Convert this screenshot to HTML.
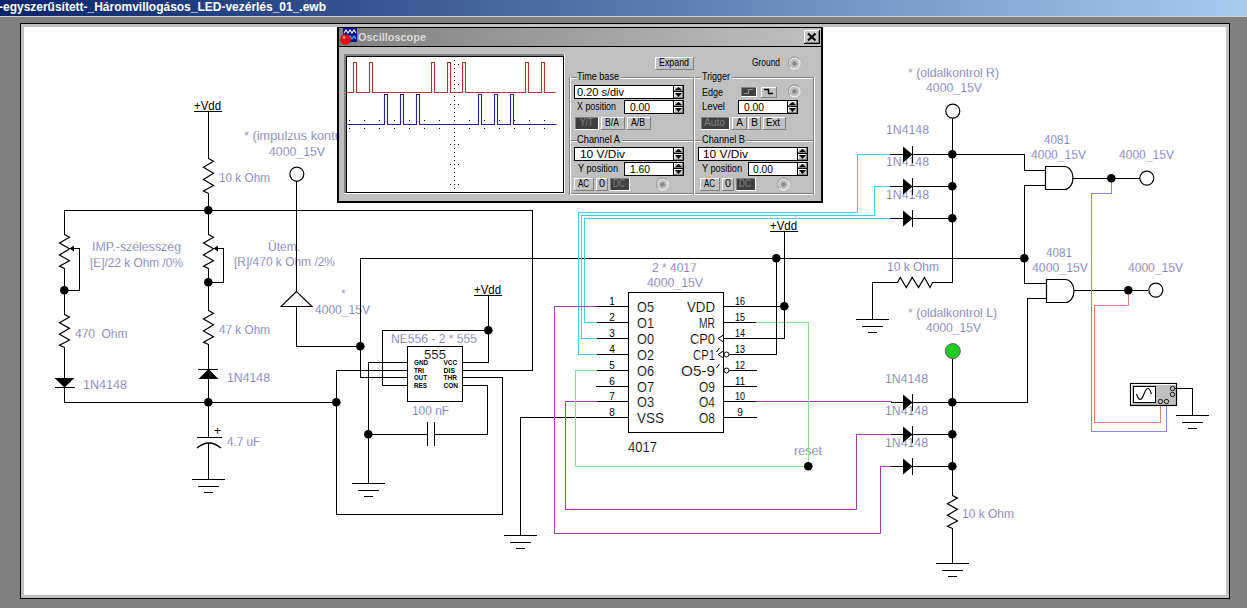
<!DOCTYPE html>
<html><head><meta charset="utf-8"><style>
html,body{margin:0;padding:0;}
body{width:1247px;height:608px;overflow:hidden;background:#808080;position:relative;font-family:"Liberation Sans",sans-serif;}
#tb{position:absolute;left:0;top:0;width:1247px;height:16px;background:linear-gradient(to right,#0a246a,#a6caf0);}
#hl{position:absolute;left:0;top:16px;width:1247px;height:1px;background:#d4d0c8;}
#cv{position:absolute;left:20px;top:23px;width:1208px;height:574px;border:1px solid #000;background:#fff;box-shadow:inset 3px 3px 0 #c0c0c0,inset -3px -3px 0 #c0c0c0;}
svg{position:absolute;left:0;top:0;}
</style></head><body>
<div id="tb"><svg width="400" height="16"><text x="-1" y="10.8" font-family="Liberation Sans" font-weight="bold" font-size="12.5" fill="#fff" textLength="327" lengthAdjust="spacingAndGlyphs">-egyszerűsített-_Háromvillogásos_LED-vezérlés_01_.ewb</text></svg></div>
<div id="hl"></div>
<div id="cv"></div>
<svg width="1247" height="608" viewBox="0 0 1247 608" shape-rendering="auto">
<text x="194" y="110" font-family="Liberation Sans" font-size="13" fill="#000" font-weight="normal" text-anchor="start" textLength="27" lengthAdjust="spacingAndGlyphs">+Vdd</text>
<text x="214" y="435" font-family="Liberation Sans" font-size="12" fill="#000" font-weight="normal" text-anchor="start">+</text>
<text x="474" y="294" font-family="Liberation Sans" font-size="13" fill="#000" font-weight="normal" text-anchor="start" textLength="27" lengthAdjust="spacingAndGlyphs">+Vdd</text>
<text x="770" y="230" font-family="Liberation Sans" font-size="13" fill="#000" font-weight="normal" text-anchor="start" textLength="27" lengthAdjust="spacingAndGlyphs">+Vdd</text>
<text x="219" y="182" font-family="Liberation Sans" font-size="12" fill="#5c5ca4" font-weight="normal" text-anchor="start" textLength="51" lengthAdjust="spacingAndGlyphs" stroke="#fff" stroke-width="0.25">10 k Ohm</text>
<text x="244" y="140" font-family="Liberation Sans" font-size="12" fill="#5c5ca4" font-weight="normal" text-anchor="start" textLength="95" lengthAdjust="spacingAndGlyphs" stroke="#fff" stroke-width="0.25">* (impulzus kontr</text>
<text x="269" y="156" font-family="Liberation Sans" font-size="12" fill="#5c5ca4" font-weight="normal" text-anchor="start" textLength="56" lengthAdjust="spacingAndGlyphs" stroke="#fff" stroke-width="0.25">4000_15V</text>
<text x="92" y="251" font-family="Liberation Sans" font-size="12" fill="#5c5ca4" font-weight="normal" text-anchor="start" textLength="89" lengthAdjust="spacingAndGlyphs" stroke="#fff" stroke-width="0.25">IMP.-szélesszég</text>
<text x="90" y="267" font-family="Liberation Sans" font-size="12" fill="#5c5ca4" font-weight="normal" text-anchor="start" textLength="93" lengthAdjust="spacingAndGlyphs" stroke="#fff" stroke-width="0.25">[E]/22 k Ohm /0%</text>
<text x="75" y="338" font-family="Liberation Sans" font-size="12" fill="#5c5ca4" font-weight="normal" text-anchor="start" textLength="20" lengthAdjust="spacingAndGlyphs" stroke="#fff" stroke-width="0.25">470</text>
<text x="101.5" y="338" font-family="Liberation Sans" font-size="12" fill="#5c5ca4" font-weight="normal" text-anchor="start" textLength="26" lengthAdjust="spacingAndGlyphs" stroke="#fff" stroke-width="0.25">Ohm</text>
<text x="83" y="389" font-family="Liberation Sans" font-size="12" fill="#5c5ca4" font-weight="normal" text-anchor="start" textLength="44" lengthAdjust="spacingAndGlyphs" stroke="#fff" stroke-width="0.25">1N4148</text>
<text x="268" y="251" font-family="Liberation Sans" font-size="12" fill="#5c5ca4" font-weight="normal" text-anchor="start" textLength="32" lengthAdjust="spacingAndGlyphs" stroke="#fff" stroke-width="0.25">Ütem.</text>
<text x="234" y="266" font-family="Liberation Sans" font-size="12" fill="#5c5ca4" font-weight="normal" text-anchor="start" textLength="101" lengthAdjust="spacingAndGlyphs" stroke="#fff" stroke-width="0.25">[R]/470 k Ohm /2%</text>
<text x="341" y="298" font-family="Liberation Sans" font-size="12" fill="#5c5ca4" font-weight="normal" text-anchor="start" stroke="#fff" stroke-width="0.25">*</text>
<text x="315" y="314" font-family="Liberation Sans" font-size="12" fill="#5c5ca4" font-weight="normal" text-anchor="start" textLength="55" lengthAdjust="spacingAndGlyphs" stroke="#fff" stroke-width="0.25">4000_15V</text>
<text x="219" y="334" font-family="Liberation Sans" font-size="12" fill="#5c5ca4" font-weight="normal" text-anchor="start" textLength="51" lengthAdjust="spacingAndGlyphs" stroke="#fff" stroke-width="0.25">47 k Ohm</text>
<text x="227" y="382" font-family="Liberation Sans" font-size="12" fill="#5c5ca4" font-weight="normal" text-anchor="start" textLength="43" lengthAdjust="spacingAndGlyphs" stroke="#fff" stroke-width="0.25">1N4148</text>
<text x="227" y="446" font-family="Liberation Sans" font-size="12" fill="#5c5ca4" font-weight="normal" text-anchor="start" textLength="33" lengthAdjust="spacingAndGlyphs" stroke="#fff" stroke-width="0.25">4.7 uF</text>
<text x="391" y="343" font-family="Liberation Sans" font-size="12" fill="#5c5ca4" font-weight="normal" text-anchor="start" textLength="86" lengthAdjust="spacingAndGlyphs" stroke="#fff" stroke-width="0.25">NE556 - 2 * 555</text>
<text x="412" y="415" font-family="Liberation Sans" font-size="12" fill="#5c5ca4" font-weight="normal" text-anchor="start" textLength="37" lengthAdjust="spacingAndGlyphs" stroke="#fff" stroke-width="0.25">100 nF</text>
<text x="652" y="272" font-family="Liberation Sans" font-size="12" fill="#5c5ca4" font-weight="normal" text-anchor="start" stroke="#fff" stroke-width="0.25">2 * 4017</text>
<text x="647" y="287" font-family="Liberation Sans" font-size="12" fill="#5c5ca4" font-weight="normal" text-anchor="start" textLength="56" lengthAdjust="spacingAndGlyphs" stroke="#fff" stroke-width="0.25">4000_15V</text>
<text x="794" y="455" font-family="Liberation Sans" font-size="12" fill="#5c5ca4" font-weight="normal" text-anchor="start" textLength="28" lengthAdjust="spacingAndGlyphs" stroke="#fff" stroke-width="0.25">reset</text>
<text x="908" y="77" font-family="Liberation Sans" font-size="12" fill="#5c5ca4" font-weight="normal" text-anchor="start" textLength="91" lengthAdjust="spacingAndGlyphs" stroke="#fff" stroke-width="0.25">* (oldalkontrol R)</text>
<text x="926" y="92" font-family="Liberation Sans" font-size="12" fill="#5c5ca4" font-weight="normal" text-anchor="start" textLength="56" lengthAdjust="spacingAndGlyphs" stroke="#fff" stroke-width="0.25">4000_15V</text>
<text x="886" y="134" font-family="Liberation Sans" font-size="12" fill="#5c5ca4" font-weight="normal" text-anchor="start" textLength="43" lengthAdjust="spacingAndGlyphs" stroke="#fff" stroke-width="0.25">1N4148</text>
<text x="886" y="166" font-family="Liberation Sans" font-size="12" fill="#5c5ca4" font-weight="normal" text-anchor="start" textLength="43" lengthAdjust="spacingAndGlyphs" stroke="#fff" stroke-width="0.25">1N4148</text>
<text x="886" y="199" font-family="Liberation Sans" font-size="12" fill="#5c5ca4" font-weight="normal" text-anchor="start" textLength="43" lengthAdjust="spacingAndGlyphs" stroke="#fff" stroke-width="0.25">1N4148</text>
<text x="887" y="271" font-family="Liberation Sans" font-size="12" fill="#5c5ca4" font-weight="normal" text-anchor="start" textLength="52" lengthAdjust="spacingAndGlyphs" stroke="#fff" stroke-width="0.25">10 k Ohm</text>
<text x="908" y="317" font-family="Liberation Sans" font-size="12" fill="#5c5ca4" font-weight="normal" text-anchor="start" textLength="89" lengthAdjust="spacingAndGlyphs" stroke="#fff" stroke-width="0.25">* (oldalkontrol L)</text>
<text x="926" y="332" font-family="Liberation Sans" font-size="12" fill="#5c5ca4" font-weight="normal" text-anchor="start" textLength="55" lengthAdjust="spacingAndGlyphs" stroke="#fff" stroke-width="0.25">4000_15V</text>
<text x="885" y="383" font-family="Liberation Sans" font-size="12" fill="#5c5ca4" font-weight="normal" text-anchor="start" textLength="43" lengthAdjust="spacingAndGlyphs" stroke="#fff" stroke-width="0.25">1N4148</text>
<text x="885" y="415" font-family="Liberation Sans" font-size="12" fill="#5c5ca4" font-weight="normal" text-anchor="start" textLength="43" lengthAdjust="spacingAndGlyphs" stroke="#fff" stroke-width="0.25">1N4148</text>
<text x="885" y="447" font-family="Liberation Sans" font-size="12" fill="#5c5ca4" font-weight="normal" text-anchor="start" textLength="43" lengthAdjust="spacingAndGlyphs" stroke="#fff" stroke-width="0.25">1N4148</text>
<text x="962" y="518" font-family="Liberation Sans" font-size="12" fill="#5c5ca4" font-weight="normal" text-anchor="start" textLength="52" lengthAdjust="spacingAndGlyphs" stroke="#fff" stroke-width="0.25">10 k Ohm</text>
<text x="1044" y="144" font-family="Liberation Sans" font-size="12" fill="#5c5ca4" font-weight="normal" text-anchor="start" textLength="26" lengthAdjust="spacingAndGlyphs" stroke="#fff" stroke-width="0.25">4081</text>
<text x="1031" y="159" font-family="Liberation Sans" font-size="12" fill="#5c5ca4" font-weight="normal" text-anchor="start" textLength="55" lengthAdjust="spacingAndGlyphs" stroke="#fff" stroke-width="0.25">4000_15V</text>
<text x="1119" y="159" font-family="Liberation Sans" font-size="12" fill="#5c5ca4" font-weight="normal" text-anchor="start" textLength="55" lengthAdjust="spacingAndGlyphs" stroke="#fff" stroke-width="0.25">4000_15V</text>
<text x="1046" y="257" font-family="Liberation Sans" font-size="12" fill="#5c5ca4" font-weight="normal" text-anchor="start" textLength="26" lengthAdjust="spacingAndGlyphs" stroke="#fff" stroke-width="0.25">4081</text>
<text x="1032" y="272" font-family="Liberation Sans" font-size="12" fill="#5c5ca4" font-weight="normal" text-anchor="start" textLength="56" lengthAdjust="spacingAndGlyphs" stroke="#fff" stroke-width="0.25">4000_15V</text>
<text x="1128" y="272" font-family="Liberation Sans" font-size="12" fill="#5c5ca4" font-weight="normal" text-anchor="start" textLength="55" lengthAdjust="spacingAndGlyphs" stroke="#fff" stroke-width="0.25">4000_15V</text>
<text x="424" y="358.5" font-family="Liberation Sans" font-size="12" fill="#000" font-weight="normal" text-anchor="start" textLength="22" lengthAdjust="spacingAndGlyphs" stroke="#fff" stroke-width="0.15">555</text>
<text x="414" y="364.8" font-family="Liberation Sans" font-size="7.5" fill="#000" font-weight="bold" text-anchor="start" textLength="14" lengthAdjust="spacingAndGlyphs">GND</text>
<text x="443.5" y="364.8" font-family="Liberation Sans" font-size="7.5" fill="#000" font-weight="bold" text-anchor="start" textLength="13.5" lengthAdjust="spacingAndGlyphs">VCC</text>
<text x="414" y="372.5" font-family="Liberation Sans" font-size="7.5" fill="#000" font-weight="bold" text-anchor="start" textLength="10" lengthAdjust="spacingAndGlyphs">TRI</text>
<text x="443.5" y="372.5" font-family="Liberation Sans" font-size="7.5" fill="#000" font-weight="bold" text-anchor="start" textLength="11.5" lengthAdjust="spacingAndGlyphs">DIS</text>
<text x="414" y="380.2" font-family="Liberation Sans" font-size="7.5" fill="#000" font-weight="bold" text-anchor="start" textLength="13" lengthAdjust="spacingAndGlyphs">OUT</text>
<text x="443.5" y="380.2" font-family="Liberation Sans" font-size="7.5" fill="#000" font-weight="bold" text-anchor="start" textLength="13.5" lengthAdjust="spacingAndGlyphs">THR</text>
<text x="414" y="387.90000000000003" font-family="Liberation Sans" font-size="7.5" fill="#000" font-weight="bold" text-anchor="start" textLength="13" lengthAdjust="spacingAndGlyphs">RES</text>
<text x="443.5" y="387.90000000000003" font-family="Liberation Sans" font-size="7.5" fill="#000" font-weight="bold" text-anchor="start" textLength="14.5" lengthAdjust="spacingAndGlyphs">CON</text>
<text x="637" y="311.5" font-family="Liberation Sans" font-size="14" fill="#000" font-weight="normal" text-anchor="start" textLength="17" lengthAdjust="spacingAndGlyphs" stroke="#fff" stroke-width="0.15">O5</text>
<text x="687" y="311.5" font-family="Liberation Sans" font-size="14" fill="#000" font-weight="normal" text-anchor="start" textLength="28" lengthAdjust="spacingAndGlyphs" stroke="#fff" stroke-width="0.15">VDD</text>
<text x="612" y="304.5" font-family="Liberation Sans" font-size="10" fill="#000" font-weight="normal" text-anchor="middle">1</text>
<text x="740" y="304.5" font-family="Liberation Sans" font-size="10" fill="#000" font-weight="normal" text-anchor="middle" textLength="10" lengthAdjust="spacingAndGlyphs">16</text>
<text x="637" y="327.5" font-family="Liberation Sans" font-size="14" fill="#000" font-weight="normal" text-anchor="start" textLength="17" lengthAdjust="spacingAndGlyphs" stroke="#fff" stroke-width="0.15">O1</text>
<text x="699" y="327.5" font-family="Liberation Sans" font-size="14" fill="#000" font-weight="normal" text-anchor="start" textLength="16" lengthAdjust="spacingAndGlyphs" stroke="#fff" stroke-width="0.15">MR</text>
<text x="612" y="320.5" font-family="Liberation Sans" font-size="10" fill="#000" font-weight="normal" text-anchor="middle">2</text>
<text x="740" y="320.5" font-family="Liberation Sans" font-size="10" fill="#000" font-weight="normal" text-anchor="middle" textLength="10" lengthAdjust="spacingAndGlyphs">15</text>
<text x="637" y="343.5" font-family="Liberation Sans" font-size="14" fill="#000" font-weight="normal" text-anchor="start" textLength="17" lengthAdjust="spacingAndGlyphs" stroke="#fff" stroke-width="0.15">O0</text>
<text x="690" y="343.5" font-family="Liberation Sans" font-size="14" fill="#000" font-weight="normal" text-anchor="start" textLength="25" lengthAdjust="spacingAndGlyphs" stroke="#fff" stroke-width="0.15">CP0</text>
<text x="612" y="336.5" font-family="Liberation Sans" font-size="10" fill="#000" font-weight="normal" text-anchor="middle">3</text>
<text x="740" y="336.5" font-family="Liberation Sans" font-size="10" fill="#000" font-weight="normal" text-anchor="middle" textLength="10" lengthAdjust="spacingAndGlyphs">14</text>
<text x="637" y="359.5" font-family="Liberation Sans" font-size="14" fill="#000" font-weight="normal" text-anchor="start" textLength="17" lengthAdjust="spacingAndGlyphs" stroke="#fff" stroke-width="0.15">O2</text>
<text x="693" y="359.5" font-family="Liberation Sans" font-size="14" fill="#000" font-weight="normal" text-anchor="start" textLength="22" lengthAdjust="spacingAndGlyphs" stroke="#fff" stroke-width="0.15">CP1</text>
<text x="612" y="352.5" font-family="Liberation Sans" font-size="10" fill="#000" font-weight="normal" text-anchor="middle">4</text>
<text x="740" y="352.5" font-family="Liberation Sans" font-size="10" fill="#000" font-weight="normal" text-anchor="middle" textLength="10" lengthAdjust="spacingAndGlyphs">13</text>
<text x="637" y="375.5" font-family="Liberation Sans" font-size="14" fill="#000" font-weight="normal" text-anchor="start" textLength="17" lengthAdjust="spacingAndGlyphs" stroke="#fff" stroke-width="0.15">O6</text>
<text x="681" y="375.5" font-family="Liberation Sans" font-size="14" fill="#000" font-weight="normal" text-anchor="start" textLength="34" lengthAdjust="spacingAndGlyphs" stroke="#fff" stroke-width="0.15">O5-9</text>
<text x="612" y="368.5" font-family="Liberation Sans" font-size="10" fill="#000" font-weight="normal" text-anchor="middle">5</text>
<text x="740" y="368.5" font-family="Liberation Sans" font-size="10" fill="#000" font-weight="normal" text-anchor="middle" textLength="10" lengthAdjust="spacingAndGlyphs">12</text>
<text x="637" y="391.5" font-family="Liberation Sans" font-size="14" fill="#000" font-weight="normal" text-anchor="start" textLength="17" lengthAdjust="spacingAndGlyphs" stroke="#fff" stroke-width="0.15">O7</text>
<text x="699" y="391.5" font-family="Liberation Sans" font-size="14" fill="#000" font-weight="normal" text-anchor="start" textLength="16" lengthAdjust="spacingAndGlyphs" stroke="#fff" stroke-width="0.15">O9</text>
<text x="612" y="384.5" font-family="Liberation Sans" font-size="10" fill="#000" font-weight="normal" text-anchor="middle">6</text>
<text x="740" y="384.5" font-family="Liberation Sans" font-size="10" fill="#000" font-weight="normal" text-anchor="middle" textLength="10" lengthAdjust="spacingAndGlyphs">11</text>
<text x="637" y="406.5" font-family="Liberation Sans" font-size="14" fill="#000" font-weight="normal" text-anchor="start" textLength="17" lengthAdjust="spacingAndGlyphs" stroke="#fff" stroke-width="0.15">O3</text>
<text x="699" y="406.5" font-family="Liberation Sans" font-size="14" fill="#000" font-weight="normal" text-anchor="start" textLength="16" lengthAdjust="spacingAndGlyphs" stroke="#fff" stroke-width="0.15">O4</text>
<text x="612" y="399.5" font-family="Liberation Sans" font-size="10" fill="#000" font-weight="normal" text-anchor="middle">7</text>
<text x="740" y="399.5" font-family="Liberation Sans" font-size="10" fill="#000" font-weight="normal" text-anchor="middle" textLength="10" lengthAdjust="spacingAndGlyphs">10</text>
<text x="637" y="422.5" font-family="Liberation Sans" font-size="14" fill="#000" font-weight="normal" text-anchor="start" textLength="27" lengthAdjust="spacingAndGlyphs" stroke="#fff" stroke-width="0.15">VSS</text>
<text x="699" y="422.5" font-family="Liberation Sans" font-size="14" fill="#000" font-weight="normal" text-anchor="start" textLength="16" lengthAdjust="spacingAndGlyphs" stroke="#fff" stroke-width="0.15">O8</text>
<text x="612" y="415.5" font-family="Liberation Sans" font-size="10" fill="#000" font-weight="normal" text-anchor="middle">8</text>
<text x="740" y="415.5" font-family="Liberation Sans" font-size="10" fill="#000" font-weight="normal" text-anchor="middle">9</text>
<text x="628" y="452" font-family="Liberation Sans" font-size="14" fill="#000" font-weight="normal" text-anchor="start" textLength="29" lengthAdjust="spacingAndGlyphs" stroke="#fff" stroke-width="0.15">4017</text>
<rect x="64" y="210" width="469" height="1" fill="#000"/>
<rect x="64" y="210" width="1" height="25" fill="#000"/>
<polyline points="64.5,234.5 69.5,237.22 59.5,243.0 69.5,248.78 59.5,254.9 69.5,260.68 59.5,266.12 64.5,268.5" fill="none" stroke="#000" stroke-width="1.2" stroke-linejoin="miter"/>
<rect x="64" y="268" width="1" height="47" fill="#000"/>
<polyline points="64.5,314.5 69.5,317.14 59.5,322.75 69.5,328.36 59.5,334.3 69.5,339.91 59.5,345.19 64.5,347.5" fill="none" stroke="#000" stroke-width="1.2" stroke-linejoin="miter"/>
<rect x="64" y="347" width="1" height="33" fill="#000"/>
<polygon points="54.5,378 74.5,378 64.5,387.5" fill="#000"/>
<rect x="55" y="387" width="20" height="1" fill="#000"/>
<rect x="64" y="386" width="1" height="17" fill="#000"/>
<rect x="69" y="248" width="11" height="1" fill="#000"/>
<polygon points="69.5,248.5 74,245.5 74,251.5" fill="#000"/>
<rect x="79" y="248" width="1" height="43" fill="#000"/>
<rect x="64" y="290" width="16" height="1" fill="#000"/>
<rect x="64" y="402" width="273" height="1" fill="#000"/>
<rect x="194" y="111" width="28" height="1" fill="#000"/>
<rect x="208" y="111" width="1" height="48" fill="#000"/>
<polyline points="208.5,158.5 213.5,161.3 203.5,167.25 213.5,173.2 203.5,179.5 213.5,185.45 203.5,191.05 208.5,193.5" fill="none" stroke="#000" stroke-width="1.2" stroke-linejoin="miter"/>
<rect x="208" y="193" width="1" height="42" fill="#000"/>
<polyline points="208.5,234.5 213.5,237.22 203.5,243.0 213.5,248.78 203.5,254.9 213.5,260.68 203.5,266.12 208.5,268.5" fill="none" stroke="#000" stroke-width="1.2" stroke-linejoin="miter"/>
<rect x="208" y="268" width="1" height="43" fill="#000"/>
<rect x="213" y="248" width="11" height="1" fill="#000"/>
<polygon points="213.5,248.5 218,245.5 218,251.5" fill="#000"/>
<rect x="223" y="248" width="1" height="35" fill="#000"/>
<rect x="208" y="282" width="16" height="1" fill="#000"/>
<polyline points="208.5,310.5 213.5,313.22 203.5,319.0 213.5,324.78 203.5,330.9 213.5,336.68 203.5,342.12 208.5,344.5" fill="none" stroke="#000" stroke-width="1.2" stroke-linejoin="miter"/>
<rect x="208" y="344" width="1" height="27" fill="#000"/>
<rect x="198" y="369" width="20" height="1" fill="#000"/>
<polygon points="208.5,369 198.5,379 218.5,379" fill="#000"/>
<rect x="208" y="378" width="1" height="60" fill="#000"/>
<rect x="197" y="437" width="25" height="1" fill="#000"/>
<path d="M197,448 Q209,438 221,448" fill="none" stroke="#000" stroke-width="1.3"/>
<rect x="208" y="443" width="1" height="37" fill="#000"/>
<rect x="192" y="479" width="33" height="1" fill="#000"/>
<rect x="198" y="486" width="21" height="1" fill="#000"/>
<rect x="204" y="492" width="9" height="1" fill="#000"/>
<circle cx="296.8" cy="174.1" r="7" fill="#fff" stroke="#000" stroke-width="1.2"/>
<rect x="296" y="181" width="1" height="112" fill="#000"/>
<polygon points="296.5,291.5 281,306.5 312,306.5" fill="#fff" stroke="#000" stroke-width="1.1"/>
<rect x="296" y="306" width="1" height="41" fill="#000"/>
<rect x="296" y="346" width="65" height="1" fill="#000"/>
<rect x="360" y="258" width="1" height="120" fill="#000"/>
<rect x="360" y="258" width="665" height="1" fill="#000"/>
<rect x="407.5" y="346.5" width="55" height="55" fill="none" stroke="#000" stroke-width="1"/>
<rect x="368" y="362" width="40" height="1" fill="#000"/>
<rect x="368" y="362" width="1" height="122" fill="#000"/>
<rect x="336" y="370" width="72" height="1" fill="#000"/>
<rect x="336" y="370" width="1" height="145" fill="#000"/>
<rect x="360" y="377" width="48" height="1" fill="#000"/>
<rect x="382" y="385" width="26" height="1" fill="#000"/>
<rect x="382" y="330" width="1" height="56" fill="#000"/>
<rect x="382" y="330" width="107" height="1" fill="#000"/>
<rect x="474" y="295" width="28" height="1" fill="#000"/>
<rect x="488" y="295" width="1" height="68" fill="#000"/>
<rect x="462" y="362" width="27" height="1" fill="#000"/>
<rect x="462" y="370" width="71" height="1" fill="#000"/>
<rect x="532" y="210" width="1" height="161" fill="#000"/>
<rect x="462" y="377" width="41" height="1" fill="#000"/>
<rect x="502" y="377" width="1" height="138" fill="#000"/>
<rect x="336" y="514" width="167" height="1" fill="#000"/>
<rect x="462" y="385" width="26" height="1" fill="#000"/>
<rect x="487" y="385" width="1" height="50" fill="#000"/>
<rect x="434" y="434" width="54" height="1" fill="#000"/>
<rect x="368" y="434" width="60" height="1" fill="#000"/>
<rect x="427" y="422" width="1" height="24" fill="#000"/>
<rect x="434" y="422" width="1" height="24" fill="#000"/>
<rect x="352" y="483" width="33" height="1" fill="#000"/>
<rect x="358" y="490" width="21" height="1" fill="#000"/>
<rect x="364" y="496" width="9" height="1" fill="#000"/>
<rect x="628.5" y="292.5" width="95" height="140" fill="none" stroke="#000" stroke-width="1"/>
<rect x="596" y="306" width="33" height="1" fill="#000"/>
<rect x="723" y="306" width="34" height="1" fill="#000"/>
<rect x="596" y="322" width="33" height="1" fill="#000"/>
<rect x="723" y="322" width="34" height="1" fill="#000"/>
<rect x="596" y="338" width="33" height="1" fill="#000"/>
<rect x="723" y="338" width="34" height="1" fill="#000"/>
<rect x="596" y="354" width="33" height="1" fill="#000"/>
<rect x="723" y="354" width="34" height="1" fill="#000"/>
<rect x="596" y="370" width="33" height="1" fill="#000"/>
<rect x="723" y="370" width="34" height="1" fill="#000"/>
<rect x="596" y="386" width="33" height="1" fill="#000"/>
<rect x="723" y="386" width="34" height="1" fill="#000"/>
<rect x="596" y="401" width="33" height="1" fill="#000"/>
<rect x="723" y="401" width="34" height="1" fill="#000"/>
<rect x="596" y="417" width="33" height="1" fill="#000"/>
<rect x="723" y="417" width="34" height="1" fill="#000"/>
<rect x="520" y="417" width="77" height="1" fill="#000"/>
<rect x="520" y="417" width="1" height="119" fill="#000"/>
<rect x="504" y="535" width="33" height="1" fill="#000"/>
<rect x="510" y="542" width="21" height="1" fill="#000"/>
<rect x="516" y="548" width="9" height="1" fill="#000"/>
<rect x="584" y="218" width="1" height="105" fill="#3cd2e6"/>
<rect x="584" y="322" width="13" height="1" fill="#3cd2e6"/>
<rect x="584" y="218" width="307" height="1" fill="#3cd2e6"/>
<rect x="581" y="215" width="1" height="124" fill="#3cd2e6"/>
<rect x="581" y="338" width="16" height="1" fill="#3cd2e6"/>
<rect x="581" y="215" width="294" height="1" fill="#3cd2e6"/>
<rect x="874" y="186" width="1" height="30" fill="#3cd2e6"/>
<rect x="874" y="186" width="17" height="1" fill="#3cd2e6"/>
<rect x="578" y="212" width="1" height="143" fill="#3cd2e6"/>
<rect x="578" y="354" width="19" height="1" fill="#3cd2e6"/>
<rect x="578" y="212" width="280" height="1" fill="#3cd2e6"/>
<rect x="857" y="154" width="1" height="59" fill="#3cd2e6"/>
<rect x="857" y="154" width="34" height="1" fill="#3cd2e6"/>
<rect x="554" y="306" width="43" height="1" fill="#a83cb4"/>
<rect x="554" y="306" width="1" height="228" fill="#a83cb4"/>
<rect x="554" y="533" width="327" height="1" fill="#a83cb4"/>
<rect x="880" y="466" width="1" height="68" fill="#a83cb4"/>
<rect x="880" y="466" width="12" height="1" fill="#a83cb4"/>
<rect x="565" y="401" width="32" height="1" fill="#a83cb4"/>
<rect x="565" y="401" width="1" height="109" fill="#a83cb4"/>
<rect x="565" y="509" width="292" height="1" fill="#a83cb4"/>
<rect x="856" y="434" width="1" height="76" fill="#a83cb4"/>
<rect x="856" y="434" width="36" height="1" fill="#a83cb4"/>
<rect x="756" y="401" width="136" height="1" fill="#a83cb4"/>
<rect x="575" y="370" width="22" height="1" fill="#86e08a"/>
<rect x="575" y="370" width="1" height="97" fill="#86e08a"/>
<rect x="575" y="466" width="234" height="1" fill="#86e08a"/>
<rect x="756" y="322" width="53" height="1" fill="#86e08a"/>
<rect x="808" y="322" width="1" height="145" fill="#86e08a"/>
<rect x="770" y="231" width="28" height="1" fill="#000"/>
<rect x="784" y="231" width="1" height="108" fill="#000"/>
<rect x="756" y="306" width="29" height="1" fill="#000"/>
<rect x="723" y="338" width="62" height="1" fill="#000"/>
<rect x="776" y="258" width="1" height="97" fill="#000"/>
<rect x="723" y="354" width="54" height="1" fill="#000"/>
<polyline points="723.5,335 718,338.5 723.5,342" fill="none" stroke="#000" stroke-width="1"/>
<polyline points="723.5,351 718,354.5 723.5,358" fill="none" stroke="#000" stroke-width="1"/>
<circle cx="726.5" cy="354.5" r="2.5" fill="#fff" stroke="#000" stroke-width="1"/>
<circle cx="726.5" cy="370.5" r="2.5" fill="#fff" stroke="#000" stroke-width="1"/>
<circle cx="952.8" cy="111.1" r="7" fill="#fff" stroke="#000" stroke-width="1.2"/>
<rect x="952" y="118" width="1" height="165" fill="#000"/>
<rect x="890" y="154" width="14" height="1" fill="#000"/>
<polygon points="903,146.5 903,162.5 912.5,154.5" fill="#000"/>
<rect x="912" y="146" width="1" height="17" fill="#000"/>
<rect x="912" y="154" width="41" height="1" fill="#000"/>
<rect x="890" y="186" width="14" height="1" fill="#000"/>
<polygon points="903,178.5 903,194.5 912.5,186.5" fill="#000"/>
<rect x="912" y="178" width="1" height="17" fill="#000"/>
<rect x="912" y="186" width="41" height="1" fill="#000"/>
<rect x="890" y="218" width="14" height="1" fill="#000"/>
<polygon points="903,210.5 903,226.5 912.5,218.5" fill="#000"/>
<rect x="912" y="210" width="1" height="17" fill="#000"/>
<rect x="912" y="218" width="41" height="1" fill="#000"/>
<rect x="932" y="282" width="21" height="1" fill="#000"/>
<polyline points="897.5,282.5 900.3,277.5 906.25,287.5 912.2,277.5 918.5,287.5 924.45,277.5 930.05,287.5 932.5,282.5" fill="none" stroke="#000" stroke-width="1.2" stroke-linejoin="miter"/>
<rect x="872" y="282" width="26" height="1" fill="#000"/>
<rect x="872" y="282" width="1" height="38" fill="#000"/>
<rect x="856" y="319" width="33" height="1" fill="#000"/>
<rect x="862" y="326" width="21" height="1" fill="#000"/>
<rect x="868" y="332" width="9" height="1" fill="#000"/>
<rect x="952" y="154" width="73" height="1" fill="#000"/>
<rect x="1024" y="154" width="1" height="17" fill="#000"/>
<rect x="1024" y="170" width="22" height="1" fill="#000"/>
<rect x="1024" y="185" width="22" height="1" fill="#000"/>
<rect x="1024" y="185" width="1" height="99" fill="#000"/>
<rect x="1024" y="283" width="23" height="1" fill="#000"/>
<rect x="1027" y="298" width="20" height="1" fill="#000"/>
<rect x="1027" y="298" width="1" height="105" fill="#000"/>
<rect x="952" y="402" width="76" height="1" fill="#000"/>
<path d="M1045.5,166.5 H1064.5 A8.5,11.5 0 0 1 1064.5,189.5 H1045.5 Z" fill="#fff" stroke="#000" stroke-width="1.2"/>
<path d="M1046.5,279.5 H1065.5 A8.5,11.5 0 0 1 1065.5,302.5 H1046.5 Z" fill="#fff" stroke="#000" stroke-width="1.2"/>
<rect x="1072" y="178" width="68" height="1" fill="#000"/>
<circle cx="1146.8" cy="178.1" r="7" fill="#fff" stroke="#000" stroke-width="1.2"/>
<rect x="1074" y="290" width="74" height="1" fill="#000"/>
<circle cx="1155.8" cy="290.1" r="7" fill="#fff" stroke="#000" stroke-width="1.2"/>
<rect x="1111" y="178" width="1" height="16" fill="#8888e0"/>
<rect x="1091" y="193" width="21" height="1" fill="#8888e0"/>
<rect x="1091" y="193" width="1" height="239" fill="#8888e0"/>
<rect x="1091" y="431" width="76" height="1" fill="#8888e0"/>
<rect x="1166" y="402" width="1" height="30" fill="#8888e0"/>
<rect x="1128" y="290" width="1" height="16" fill="#e08080"/>
<rect x="1094" y="305" width="35" height="1" fill="#e08080"/>
<rect x="1094" y="305" width="1" height="118" fill="#e08080"/>
<rect x="1094" y="422" width="67" height="1" fill="#e08080"/>
<rect x="1160" y="402" width="1" height="21" fill="#e08080"/>
<rect x="1130.5" y="383.5" width="46" height="22" fill="#c0c0c0" stroke="#000" stroke-width="1.2"/>
<rect x="1133.5" y="386.5" width="22" height="16" fill="#fff" stroke="#000" stroke-width="1"/>
<path d="M1131.5,404 V384.5 H1176" fill="none" stroke="#fff" stroke-width="1"/>
<path d="M1136.5,394 Q1140,405 1144,394 T1151.5,394" fill="none" stroke="#000" stroke-width="1.1"/>
<circle cx="1160.5" cy="401.5" r="2.2" fill="#c0c0c0" stroke="#000" stroke-width="0.9"/>
<circle cx="1166.5" cy="401.5" r="2.2" fill="#c0c0c0" stroke="#000" stroke-width="0.9"/>
<circle cx="1172.5" cy="388.5" r="2.2" fill="#c0c0c0" stroke="#000" stroke-width="0.9"/>
<circle cx="1172.5" cy="394.5" r="2.2" fill="#c0c0c0" stroke="#000" stroke-width="0.9"/>
<rect x="1175" y="388" width="18" height="1" fill="#000"/>
<rect x="1192" y="388" width="1" height="28" fill="#000"/>
<rect x="1176" y="415" width="33" height="1" fill="#000"/>
<rect x="1182" y="422" width="21" height="1" fill="#000"/>
<rect x="1188" y="428" width="9" height="1" fill="#000"/>
<rect x="952" y="358" width="1" height="138" fill="#000"/>
<circle cx="952.8" cy="351.1" r="7.5" fill="#20cc20" stroke="#606060" stroke-width="1"/>
<rect x="891" y="402" width="13" height="1" fill="#000"/>
<polygon points="903,394.5 903,410.5 912.5,402.5" fill="#000"/>
<rect x="912" y="394" width="1" height="17" fill="#000"/>
<rect x="912" y="402" width="41" height="1" fill="#000"/>
<rect x="891" y="434" width="13" height="1" fill="#000"/>
<polygon points="903,426.5 903,442.5 912.5,434.5" fill="#000"/>
<rect x="912" y="426" width="1" height="17" fill="#000"/>
<rect x="912" y="434" width="41" height="1" fill="#000"/>
<rect x="891" y="466" width="13" height="1" fill="#000"/>
<polygon points="903,458.5 903,474.5 912.5,466.5" fill="#000"/>
<rect x="912" y="458" width="1" height="17" fill="#000"/>
<rect x="912" y="466" width="41" height="1" fill="#000"/>
<polyline points="952.5,495.5 957.5,498.14 947.5,503.75 957.5,509.36 947.5,515.3 957.5,520.91 947.5,526.19 952.5,528.5" fill="none" stroke="#000" stroke-width="1.2" stroke-linejoin="miter"/>
<rect x="952" y="528" width="1" height="36" fill="#000"/>
<rect x="936" y="563" width="33" height="1" fill="#000"/>
<rect x="942" y="570" width="21" height="1" fill="#000"/>
<rect x="948" y="576" width="9" height="1" fill="#000"/>
<path d="M719.5,348 L716.5,352 M719.5,364 L716.5,368" stroke="#000" stroke-width="1"/>
<circle cx="64.3" cy="290.3" r="4.3" fill="#000"/>
<circle cx="208.3" cy="210.3" r="4.3" fill="#000"/>
<circle cx="208.3" cy="282.3" r="4.3" fill="#000"/>
<circle cx="208.3" cy="402.3" r="4.3" fill="#000"/>
<circle cx="360.3" cy="346.3" r="4.3" fill="#000"/>
<circle cx="368.3" cy="434.3" r="4.3" fill="#000"/>
<circle cx="336.3" cy="402.3" r="4.3" fill="#000"/>
<circle cx="488.3" cy="330.3" r="4.3" fill="#000"/>
<circle cx="808.3" cy="466.3" r="4.3" fill="#000"/>
<circle cx="784.3" cy="306.3" r="4.3" fill="#000"/>
<circle cx="776.3" cy="258.3" r="4.3" fill="#000"/>
<circle cx="952.3" cy="154.3" r="4.3" fill="#000"/>
<circle cx="952.3" cy="186.3" r="4.3" fill="#000"/>
<circle cx="952.3" cy="218.3" r="4.3" fill="#000"/>
<circle cx="1024.3" cy="258.3" r="4.3" fill="#000"/>
<circle cx="1111.3" cy="178.3" r="4.3" fill="#000"/>
<circle cx="1128.3" cy="290.3" r="4.3" fill="#000"/>
<circle cx="952.3" cy="402.3" r="4.3" fill="#000"/>
<circle cx="952.3" cy="434.3" r="4.3" fill="#000"/>
<circle cx="952.3" cy="466.3" r="4.3" fill="#000"/>
<defs><linearGradient id="tg" x1="0" x2="1" y1="0" y2="0"><stop offset="0" stop-color="#808080"/><stop offset="1" stop-color="#c0c0c0"/></linearGradient></defs>
<rect x="337" y="27" width="486" height="176" fill="#000"/>
<rect x="339" y="28" width="482" height="18" fill="url(#tg)"/>
<rect x="339" y="47" width="482" height="154" fill="#c0c0c0"/>
<rect x="343" y="28" width="14" height="14" fill="#10108a"/>
<polyline points="344,33 346,30 348,33 350,30 352,33 354,30 356,33" fill="none" stroke="#fff" stroke-width="1.2"/>
<polyline points="348,39 350,36 352,39 354,36 356,39" fill="none" stroke="#30d0f0" stroke-width="1.2"/>
<circle cx="345.5" cy="39.5" r="5.3" fill="#e01010"/>
<circle cx="344" cy="37.5" r="1.2" fill="#ffb0b0"/>
<text x="358" y="41" font-family="Liberation Sans" font-size="11" fill="#d8d8d8" font-weight="bold" text-anchor="start" textLength="68" lengthAdjust="spacingAndGlyphs">Oscilloscope</text>
<rect x="804" y="30" width="16" height="14" fill="#000"/>
<rect x="804" y="30" width="15" height="13" fill="#fff"/>
<rect x="805" y="31" width="14" height="12" fill="#808080"/>
<rect x="805" y="31" width="13" height="11" fill="#c8c8c8"/>
<path d="M808,33.5 L815.5,40.5 M815.5,33.5 L808,40.5" stroke="#000" stroke-width="2"/>
<rect x="344" y="54" width="221" height="140" fill="#fff"/>
<rect x="344" y="54" width="220" height="139" fill="#808080"/>
<rect x="346" y="56" width="218" height="137" fill="#000"/>
<rect x="347" y="57" width="216" height="135" fill="#fff"/>
<rect x="349" y="120" width="1" height="1" fill="#000"/>
<rect x="364" y="120" width="1" height="1" fill="#000"/>
<rect x="379" y="120" width="1" height="1" fill="#000"/>
<rect x="394" y="120" width="1" height="1" fill="#000"/>
<rect x="409" y="120" width="1" height="1" fill="#000"/>
<rect x="424" y="120" width="1" height="1" fill="#000"/>
<rect x="439" y="120" width="1" height="1" fill="#000"/>
<rect x="454" y="120" width="1" height="1" fill="#000"/>
<rect x="469" y="120" width="1" height="1" fill="#000"/>
<rect x="484" y="120" width="1" height="1" fill="#000"/>
<rect x="499" y="120" width="1" height="1" fill="#000"/>
<rect x="514" y="120" width="1" height="1" fill="#000"/>
<rect x="529" y="120" width="1" height="1" fill="#000"/>
<rect x="544" y="120" width="1" height="1" fill="#000"/>
<rect x="349" y="128" width="1" height="1" fill="#000"/>
<rect x="364" y="128" width="1" height="1" fill="#000"/>
<rect x="379" y="128" width="1" height="1" fill="#000"/>
<rect x="394" y="128" width="1" height="1" fill="#000"/>
<rect x="409" y="128" width="1" height="1" fill="#000"/>
<rect x="424" y="128" width="1" height="1" fill="#000"/>
<rect x="439" y="128" width="1" height="1" fill="#000"/>
<rect x="454" y="128" width="1" height="1" fill="#000"/>
<rect x="469" y="128" width="1" height="1" fill="#000"/>
<rect x="484" y="128" width="1" height="1" fill="#000"/>
<rect x="499" y="128" width="1" height="1" fill="#000"/>
<rect x="514" y="128" width="1" height="1" fill="#000"/>
<rect x="529" y="128" width="1" height="1" fill="#000"/>
<rect x="544" y="128" width="1" height="1" fill="#000"/>
<rect x="454" y="60" width="1" height="1" fill="#000"/>
<rect x="454" y="64" width="1" height="1" fill="#000"/>
<rect x="454" y="68" width="1" height="1" fill="#000"/>
<rect x="454" y="72" width="1" height="1" fill="#000"/>
<rect x="454" y="76" width="1" height="1" fill="#000"/>
<rect x="454" y="80" width="1" height="1" fill="#000"/>
<rect x="454" y="84" width="1" height="1" fill="#000"/>
<rect x="454" y="88" width="1" height="1" fill="#000"/>
<rect x="454" y="92" width="1" height="1" fill="#000"/>
<rect x="454" y="96" width="1" height="1" fill="#000"/>
<rect x="454" y="100" width="1" height="1" fill="#000"/>
<rect x="454" y="104" width="1" height="1" fill="#000"/>
<rect x="454" y="108" width="1" height="1" fill="#000"/>
<rect x="454" y="112" width="1" height="1" fill="#000"/>
<rect x="454" y="116" width="1" height="1" fill="#000"/>
<rect x="454" y="120" width="1" height="1" fill="#000"/>
<rect x="454" y="124" width="1" height="1" fill="#000"/>
<rect x="454" y="128" width="1" height="1" fill="#000"/>
<rect x="454" y="132" width="1" height="1" fill="#000"/>
<rect x="454" y="136" width="1" height="1" fill="#000"/>
<rect x="454" y="140" width="1" height="1" fill="#000"/>
<rect x="454" y="144" width="1" height="1" fill="#000"/>
<rect x="454" y="148" width="1" height="1" fill="#000"/>
<rect x="454" y="152" width="1" height="1" fill="#000"/>
<rect x="454" y="156" width="1" height="1" fill="#000"/>
<rect x="454" y="160" width="1" height="1" fill="#000"/>
<rect x="454" y="164" width="1" height="1" fill="#000"/>
<rect x="454" y="168" width="1" height="1" fill="#000"/>
<rect x="454" y="172" width="1" height="1" fill="#000"/>
<rect x="454" y="176" width="1" height="1" fill="#000"/>
<rect x="454" y="180" width="1" height="1" fill="#000"/>
<rect x="454" y="184" width="1" height="1" fill="#000"/>
<rect x="454" y="188" width="1" height="1" fill="#000"/>
<rect x="450" y="64" width="1" height="1" fill="#000"/>
<rect x="458" y="64" width="1" height="1" fill="#000"/>
<rect x="450" y="84" width="1" height="1" fill="#000"/>
<rect x="458" y="84" width="1" height="1" fill="#000"/>
<rect x="450" y="104" width="1" height="1" fill="#000"/>
<rect x="458" y="104" width="1" height="1" fill="#000"/>
<rect x="450" y="144" width="1" height="1" fill="#000"/>
<rect x="458" y="144" width="1" height="1" fill="#000"/>
<rect x="450" y="164" width="1" height="1" fill="#000"/>
<rect x="458" y="164" width="1" height="1" fill="#000"/>
<rect x="450" y="184" width="1" height="1" fill="#000"/>
<rect x="458" y="184" width="1" height="1" fill="#000"/>
<polyline points="346.5,92.5 353.5,92.5 353.5,62.5 356.5,62.5 356.5,92.5 369.5,92.5 369.5,62.5 372.5,62.5 372.5,92.5 431.5,92.5 431.5,62.5 434.5,62.5 434.5,92.5 447.5,92.5 447.5,62.5 450.5,62.5 450.5,92.5 462.5,92.5 462.5,62.5 465.5,62.5 465.5,92.5 525.5,92.5 525.5,62.5 528.5,62.5 528.5,92.5 541.5,92.5 541.5,62.5 544.5,62.5 544.5,92.5 555.5,92.5" fill="none" stroke="#b83232" stroke-width="1.1"/>
<polyline points="347.5,124.5 384.5,124.5 384.5,94.5 387.5,94.5 387.5,124.5 400.5,124.5 400.5,94.5 403.5,94.5 403.5,124.5 416.5,124.5 416.5,94.5 419.5,94.5 419.5,124.5 478.5,124.5 478.5,94.5 481.5,94.5 481.5,124.5 494.5,124.5 494.5,94.5 497.5,94.5 497.5,124.5 510.5,124.5 510.5,94.5 513.5,94.5 513.5,124.5 556.5,124.5" fill="none" stroke="#24249c" stroke-width="1.1"/>
<rect x="655" y="57" width="39" height="13" fill="#808080"/>
<rect x="655" y="57" width="38" height="12" fill="#fff"/>
<rect x="656" y="58" width="37" height="11" fill="#c0c0c0"/>
<text x="659" y="66" font-family="Liberation Sans" font-size="10" fill="#000" font-weight="normal" text-anchor="start" textLength="30" lengthAdjust="spacingAndGlyphs">Expand</text>
<text x="752" y="66" font-family="Liberation Sans" font-size="10" fill="#000" font-weight="normal" text-anchor="start" textLength="28" lengthAdjust="spacingAndGlyphs">Ground</text>
<circle cx="794.5" cy="63.5" r="5.5" fill="#c0c0c0" stroke="#fff" stroke-width="1"/>
<path d="M790,67 A5.5,5.5 0 0 1 799,59" fill="none" stroke="#909090" stroke-width="1"/>
<circle cx="794.5" cy="63.5" r="2.3" fill="#888"/>
<rect x="569" y="77" width="8" height="1" fill="#808080"/>
<rect x="569" y="78" width="8" height="1" fill="#fff"/>
<rect x="621" y="77" width="80" height="1" fill="#808080"/>
<rect x="621" y="78" width="80" height="1" fill="#fff"/>
<rect x="732" y="77" width="83" height="1" fill="#808080"/>
<rect x="732" y="78" width="83" height="1" fill="#fff"/>
<rect x="569" y="140" width="8" height="1" fill="#808080"/>
<rect x="569" y="141" width="8" height="1" fill="#fff"/>
<rect x="622" y="140" width="79" height="1" fill="#808080"/>
<rect x="622" y="141" width="79" height="1" fill="#fff"/>
<rect x="747" y="140" width="68" height="1" fill="#808080"/>
<rect x="747" y="141" width="68" height="1" fill="#fff"/>
<rect x="569" y="193" width="246" height="1" fill="#808080"/>
<rect x="569" y="194" width="246" height="1" fill="#fff"/>
<rect x="569" y="77" width="1" height="118" fill="#808080"/>
<rect x="570" y="77" width="1" height="118" fill="#fff"/>
<rect x="693" y="77" width="1" height="118" fill="#808080"/>
<rect x="694" y="77" width="1" height="118" fill="#fff"/>
<rect x="813" y="77" width="1" height="118" fill="#808080"/>
<rect x="814" y="77" width="1" height="118" fill="#fff"/>
<text x="577" y="80" font-family="Liberation Sans" font-size="10" fill="#000" font-weight="normal" text-anchor="start" textLength="42" lengthAdjust="spacingAndGlyphs">Time base</text>
<text x="702" y="80" font-family="Liberation Sans" font-size="10" fill="#000" font-weight="normal" text-anchor="start" textLength="28" lengthAdjust="spacingAndGlyphs">Trigger</text>
<text x="577" y="143" font-family="Liberation Sans" font-size="10" fill="#000" font-weight="normal" text-anchor="start" textLength="43" lengthAdjust="spacingAndGlyphs">Channel A</text>
<text x="702" y="143" font-family="Liberation Sans" font-size="10" fill="#000" font-weight="normal" text-anchor="start" textLength="43" lengthAdjust="spacingAndGlyphs">Channel B</text>
<rect x="574" y="85" width="110" height="14" fill="#000"/>
<rect x="575" y="86" width="108" height="12" fill="#fff"/>
<rect x="673" y="86" width="1" height="12" fill="#000"/>
<rect x="674" y="91" width="9" height="1" fill="#000"/>
<rect x="674" y="86" width="9" height="5" fill="#808080"/>
<rect x="674" y="86" width="8" height="4" fill="#fff"/>
<rect x="675" y="87" width="7" height="3" fill="#c8c8c8"/>
<rect x="674" y="92" width="9" height="6" fill="#808080"/>
<rect x="674" y="92" width="8" height="5" fill="#fff"/>
<rect x="675" y="93" width="7" height="4" fill="#c8c8c8"/>
<polygon points="675.0,90 682.0,90 678.5,87" fill="#000"/>
<polygon points="675.0,93 682.0,93 678.5,97" fill="#000"/>
<text x="577" y="95.5" font-family="Liberation Sans" font-size="10" fill="#000" font-weight="normal" text-anchor="start" textLength="47" lengthAdjust="spacingAndGlyphs">0.20 s/div</text>
<text x="577" y="110" font-family="Liberation Sans" font-size="10" fill="#000" font-weight="normal" text-anchor="start" textLength="39" lengthAdjust="spacingAndGlyphs">X position</text>
<rect x="624" y="100" width="60" height="14" fill="#000"/>
<rect x="625" y="101" width="58" height="12" fill="#fff"/>
<rect x="673" y="101" width="1" height="12" fill="#000"/>
<rect x="674" y="106" width="9" height="1" fill="#000"/>
<rect x="674" y="101" width="9" height="5" fill="#808080"/>
<rect x="674" y="101" width="8" height="4" fill="#fff"/>
<rect x="675" y="102" width="7" height="3" fill="#c8c8c8"/>
<rect x="674" y="107" width="9" height="6" fill="#808080"/>
<rect x="674" y="107" width="8" height="5" fill="#fff"/>
<rect x="675" y="108" width="7" height="4" fill="#c8c8c8"/>
<polygon points="675.0,105 682.0,105 678.5,102" fill="#000"/>
<polygon points="675.0,108 682.0,108 678.5,112" fill="#000"/>
<text x="630" y="110.5" font-family="Liberation Sans" font-size="10" fill="#000" font-weight="normal" text-anchor="start" textLength="20" lengthAdjust="spacingAndGlyphs">0.00</text>
<rect x="575" y="117" width="24" height="13" fill="#fff"/>
<rect x="575" y="117" width="23" height="12" fill="#808080"/>
<rect x="576" y="118" width="22" height="11" fill="#404040"/>
<text x="580" y="126" font-family="Liberation Sans" font-size="10" fill="#808080" font-weight="normal" text-anchor="start" textLength="13" lengthAdjust="spacingAndGlyphs">Y/T</text>
<rect x="601" y="117" width="24" height="13" fill="#808080"/>
<rect x="601" y="117" width="23" height="12" fill="#fff"/>
<rect x="602" y="118" width="22" height="11" fill="#c0c0c0"/>
<text x="605" y="126" font-family="Liberation Sans" font-size="10" fill="#000" font-weight="normal" text-anchor="start" textLength="14" lengthAdjust="spacingAndGlyphs">B/A</text>
<rect x="627" y="117" width="24" height="13" fill="#808080"/>
<rect x="627" y="117" width="23" height="12" fill="#fff"/>
<rect x="628" y="118" width="22" height="11" fill="#c0c0c0"/>
<text x="631" y="126" font-family="Liberation Sans" font-size="10" fill="#000" font-weight="normal" text-anchor="start" textLength="14" lengthAdjust="spacingAndGlyphs">A/B</text>
<rect x="574" y="147" width="110" height="14" fill="#000"/>
<rect x="575" y="148" width="108" height="12" fill="#fff"/>
<rect x="673" y="148" width="1" height="12" fill="#000"/>
<rect x="674" y="153" width="9" height="1" fill="#000"/>
<rect x="674" y="148" width="9" height="5" fill="#808080"/>
<rect x="674" y="148" width="8" height="4" fill="#fff"/>
<rect x="675" y="149" width="7" height="3" fill="#c8c8c8"/>
<rect x="674" y="154" width="9" height="6" fill="#808080"/>
<rect x="674" y="154" width="8" height="5" fill="#fff"/>
<rect x="675" y="155" width="7" height="4" fill="#c8c8c8"/>
<polygon points="675.0,152 682.0,152 678.5,149" fill="#000"/>
<polygon points="675.0,155 682.0,155 678.5,159" fill="#000"/>
<text x="580" y="157.5" font-family="Liberation Sans" font-size="10" fill="#000" font-weight="normal" text-anchor="start" textLength="45" lengthAdjust="spacingAndGlyphs">10 V/Div</text>
<text x="578" y="172" font-family="Liberation Sans" font-size="10" fill="#000" font-weight="normal" text-anchor="start" textLength="40" lengthAdjust="spacingAndGlyphs">Y position</text>
<rect x="624" y="162" width="60" height="14" fill="#000"/>
<rect x="625" y="163" width="58" height="12" fill="#fff"/>
<rect x="673" y="163" width="1" height="12" fill="#000"/>
<rect x="674" y="168" width="9" height="1" fill="#000"/>
<rect x="674" y="163" width="9" height="5" fill="#808080"/>
<rect x="674" y="163" width="8" height="4" fill="#fff"/>
<rect x="675" y="164" width="7" height="3" fill="#c8c8c8"/>
<rect x="674" y="169" width="9" height="6" fill="#808080"/>
<rect x="674" y="169" width="8" height="5" fill="#fff"/>
<rect x="675" y="170" width="7" height="4" fill="#c8c8c8"/>
<polygon points="675.0,167 682.0,167 678.5,164" fill="#000"/>
<polygon points="675.0,170 682.0,170 678.5,174" fill="#000"/>
<text x="630" y="172.5" font-family="Liberation Sans" font-size="10" fill="#000" font-weight="normal" text-anchor="start" textLength="20" lengthAdjust="spacingAndGlyphs">1.60</text>
<rect x="574" y="178" width="20" height="13" fill="#808080"/>
<rect x="574" y="178" width="19" height="12" fill="#fff"/>
<rect x="575" y="179" width="18" height="11" fill="#c0c0c0"/>
<text x="578" y="187" font-family="Liberation Sans" font-size="10" fill="#000" font-weight="normal" text-anchor="start" textLength="11" lengthAdjust="spacingAndGlyphs">AC</text>
<rect x="596" y="178" width="12" height="13" fill="#808080"/>
<rect x="596" y="178" width="11" height="12" fill="#fff"/>
<rect x="597" y="179" width="10" height="11" fill="#c0c0c0"/>
<text x="599" y="187" font-family="Liberation Sans" font-size="10" fill="#000" font-weight="normal" text-anchor="start" textLength="6" lengthAdjust="spacingAndGlyphs">0</text>
<rect x="610" y="178" width="20" height="13" fill="#fff"/>
<rect x="610" y="178" width="19" height="12" fill="#808080"/>
<rect x="611" y="179" width="18" height="11" fill="#404040"/>
<text x="613" y="187" font-family="Liberation Sans" font-size="10" fill="#808080" font-weight="normal" text-anchor="start" textLength="12" lengthAdjust="spacingAndGlyphs">DC</text>
<circle cx="662.5" cy="184.5" r="5.5" fill="#c0c0c0" stroke="#fff" stroke-width="1"/>
<path d="M658,188 A5.5,5.5 0 0 1 667,180" fill="none" stroke="#909090" stroke-width="1"/>
<circle cx="662.5" cy="184.5" r="2.3" fill="#888"/>
<text x="702" y="96" font-family="Liberation Sans" font-size="10" fill="#000" font-weight="normal" text-anchor="start" textLength="21" lengthAdjust="spacingAndGlyphs">Edge</text>
<rect x="741" y="87" width="16" height="10" fill="#fff"/>
<rect x="741" y="87" width="15" height="9" fill="#808080"/>
<rect x="742" y="88" width="14" height="8" fill="#404040"/>
<polyline points="744,93.5 748.5,93.5 748.5,89.5 753,89.5" fill="none" stroke="#909090" stroke-width="1.2"/>
<rect x="761" y="87" width="16" height="11" fill="#808080"/>
<rect x="761" y="87" width="15" height="10" fill="#fff"/>
<rect x="762" y="88" width="14" height="9" fill="#c0c0c0"/>
<polyline points="764,89.5 768.5,89.5 768.5,93.5 773,93.5" fill="none" stroke="#000" stroke-width="1.4"/>
<circle cx="794.5" cy="91.5" r="5.5" fill="#c0c0c0" stroke="#fff" stroke-width="1"/>
<path d="M790,95 A5.5,5.5 0 0 1 799,87" fill="none" stroke="#909090" stroke-width="1"/>
<circle cx="794.5" cy="91.5" r="2.3" fill="#888"/>
<text x="702" y="110" font-family="Liberation Sans" font-size="10" fill="#000" font-weight="normal" text-anchor="start" textLength="23" lengthAdjust="spacingAndGlyphs">Level</text>
<rect x="738" y="100" width="60" height="14" fill="#000"/>
<rect x="739" y="101" width="58" height="12" fill="#fff"/>
<rect x="787" y="101" width="1" height="12" fill="#000"/>
<rect x="788" y="106" width="9" height="1" fill="#000"/>
<rect x="788" y="101" width="9" height="5" fill="#808080"/>
<rect x="788" y="101" width="8" height="4" fill="#fff"/>
<rect x="789" y="102" width="7" height="3" fill="#c8c8c8"/>
<rect x="788" y="107" width="9" height="6" fill="#808080"/>
<rect x="788" y="107" width="8" height="5" fill="#fff"/>
<rect x="789" y="108" width="7" height="4" fill="#c8c8c8"/>
<polygon points="789.0,105 796.0,105 792.5,102" fill="#000"/>
<polygon points="789.0,108 796.0,108 792.5,112" fill="#000"/>
<text x="744" y="110.5" font-family="Liberation Sans" font-size="10" fill="#000" font-weight="normal" text-anchor="start" textLength="20" lengthAdjust="spacingAndGlyphs">0.00</text>
<rect x="701" y="117" width="29" height="13" fill="#fff"/>
<rect x="701" y="117" width="28" height="12" fill="#808080"/>
<rect x="702" y="118" width="27" height="11" fill="#404040"/>
<text x="704" y="126" font-family="Liberation Sans" font-size="10" fill="#808080" font-weight="normal" text-anchor="start" textLength="21" lengthAdjust="spacingAndGlyphs">Auto</text>
<rect x="732" y="117" width="15" height="13" fill="#808080"/>
<rect x="732" y="117" width="14" height="12" fill="#fff"/>
<rect x="733" y="118" width="13" height="11" fill="#c0c0c0"/>
<text x="736.2" y="126" font-family="Liberation Sans" font-size="10" fill="#000" font-weight="normal" text-anchor="start">A</text>
<rect x="748" y="117" width="13" height="13" fill="#808080"/>
<rect x="748" y="117" width="12" height="12" fill="#fff"/>
<rect x="749" y="118" width="11" height="11" fill="#c0c0c0"/>
<text x="751.2" y="126" font-family="Liberation Sans" font-size="10" fill="#000" font-weight="normal" text-anchor="start">B</text>
<rect x="763" y="117" width="23" height="13" fill="#808080"/>
<rect x="763" y="117" width="22" height="12" fill="#fff"/>
<rect x="764" y="118" width="21" height="11" fill="#c0c0c0"/>
<text x="766" y="126" font-family="Liberation Sans" font-size="10" fill="#000" font-weight="normal" text-anchor="start" textLength="14" lengthAdjust="spacingAndGlyphs">Ext</text>
<rect x="698" y="147" width="110" height="14" fill="#000"/>
<rect x="699" y="148" width="108" height="12" fill="#fff"/>
<rect x="797" y="148" width="1" height="12" fill="#000"/>
<rect x="798" y="153" width="9" height="1" fill="#000"/>
<rect x="798" y="148" width="9" height="5" fill="#808080"/>
<rect x="798" y="148" width="8" height="4" fill="#fff"/>
<rect x="799" y="149" width="7" height="3" fill="#c8c8c8"/>
<rect x="798" y="154" width="9" height="6" fill="#808080"/>
<rect x="798" y="154" width="8" height="5" fill="#fff"/>
<rect x="799" y="155" width="7" height="4" fill="#c8c8c8"/>
<polygon points="799.0,152 806.0,152 802.5,149" fill="#000"/>
<polygon points="799.0,155 806.0,155 802.5,159" fill="#000"/>
<text x="703" y="157.5" font-family="Liberation Sans" font-size="10" fill="#000" font-weight="normal" text-anchor="start" textLength="45" lengthAdjust="spacingAndGlyphs">10 V/Div</text>
<text x="702" y="172" font-family="Liberation Sans" font-size="10" fill="#000" font-weight="normal" text-anchor="start" textLength="40" lengthAdjust="spacingAndGlyphs">Y position</text>
<rect x="748" y="162" width="60" height="14" fill="#000"/>
<rect x="749" y="163" width="58" height="12" fill="#fff"/>
<rect x="797" y="163" width="1" height="12" fill="#000"/>
<rect x="798" y="168" width="9" height="1" fill="#000"/>
<rect x="798" y="163" width="9" height="5" fill="#808080"/>
<rect x="798" y="163" width="8" height="4" fill="#fff"/>
<rect x="799" y="164" width="7" height="3" fill="#c8c8c8"/>
<rect x="798" y="169" width="9" height="6" fill="#808080"/>
<rect x="798" y="169" width="8" height="5" fill="#fff"/>
<rect x="799" y="170" width="7" height="4" fill="#c8c8c8"/>
<polygon points="799.0,167 806.0,167 802.5,164" fill="#000"/>
<polygon points="799.0,170 806.0,170 802.5,174" fill="#000"/>
<text x="753" y="172.5" font-family="Liberation Sans" font-size="10" fill="#000" font-weight="normal" text-anchor="start" textLength="20" lengthAdjust="spacingAndGlyphs">0.00</text>
<rect x="700" y="178" width="20" height="13" fill="#808080"/>
<rect x="700" y="178" width="19" height="12" fill="#fff"/>
<rect x="701" y="179" width="18" height="11" fill="#c0c0c0"/>
<text x="704" y="187" font-family="Liberation Sans" font-size="10" fill="#000" font-weight="normal" text-anchor="start" textLength="11" lengthAdjust="spacingAndGlyphs">AC</text>
<rect x="722" y="178" width="12" height="13" fill="#808080"/>
<rect x="722" y="178" width="11" height="12" fill="#fff"/>
<rect x="723" y="179" width="10" height="11" fill="#c0c0c0"/>
<text x="725" y="187" font-family="Liberation Sans" font-size="10" fill="#000" font-weight="normal" text-anchor="start" textLength="6" lengthAdjust="spacingAndGlyphs">0</text>
<rect x="736" y="178" width="20" height="13" fill="#fff"/>
<rect x="736" y="178" width="19" height="12" fill="#808080"/>
<rect x="737" y="179" width="18" height="11" fill="#404040"/>
<text x="739" y="187" font-family="Liberation Sans" font-size="10" fill="#808080" font-weight="normal" text-anchor="start" textLength="12" lengthAdjust="spacingAndGlyphs">DC</text>
<circle cx="783.5" cy="184.5" r="5.5" fill="#c0c0c0" stroke="#fff" stroke-width="1"/>
<path d="M779,188 A5.5,5.5 0 0 1 788,180" fill="none" stroke="#909090" stroke-width="1"/>
<circle cx="783.5" cy="184.5" r="2.3" fill="#888"/>
</svg>
</body></html>
